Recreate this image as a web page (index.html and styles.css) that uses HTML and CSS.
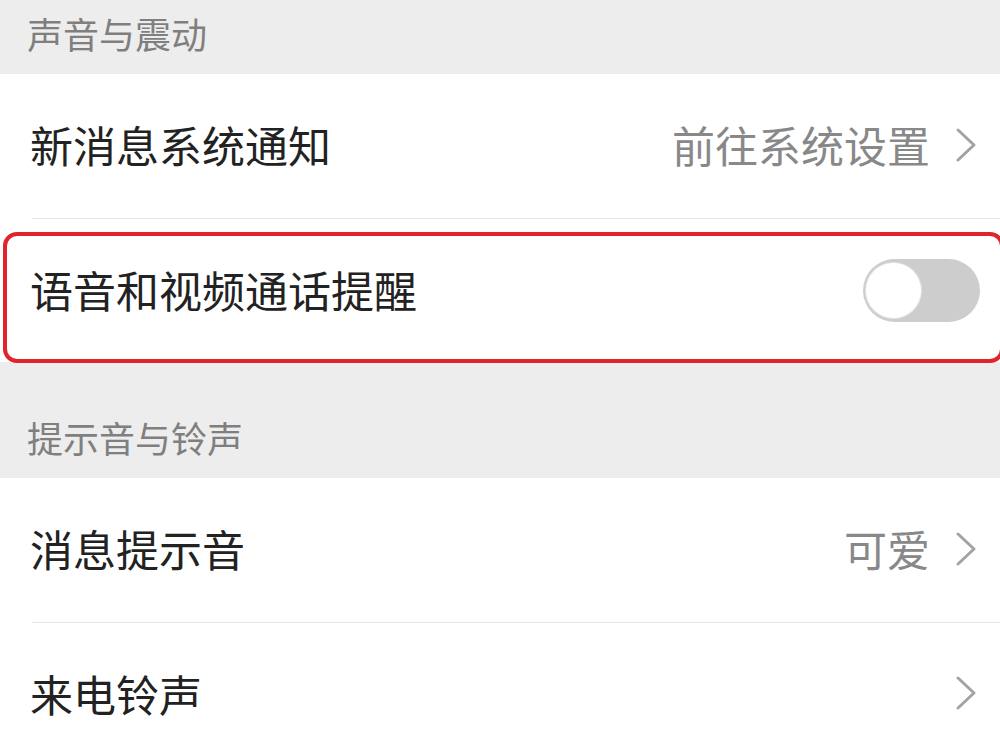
FILE: index.html
```html
<!DOCTYPE html>
<html lang="zh-CN">
<head>
<meta charset="utf-8" />
<meta name="viewport" content="width=device-width, initial-scale=1"/>
<link rel="stylesheet" href="styles.css">
</head>
<body>
  <div class="group-title first">声音与震动</div>
  <ul class="list">
    <li class="cell">
      <span class="label">新消息系统通知</span>
      <span class="extra"><span class="value">前往系统设置</span><svg class="arrow" width="22" height="36" viewBox="0 0 22 36"><polyline points="3,3 19,18 3,33" /></svg></span>
    </li>
    <li class="cell marked">
      <span class="label">语音和视频通话提醒</span>
      <span class="switch"><span class="knob"></span></span>
      <span class="mark"></span>
    </li>
  </ul>

  <div class="group-title">提示音与铃声</div>
  <ul class="list">
    <li class="cell">
      <span class="label">消息提示音</span>
      <span class="extra"><span class="value">可爱</span><svg class="arrow" width="22" height="36" viewBox="0 0 22 36"><polyline points="3,3 19,18 3,33" /></svg></span>
    </li>
    <li class="cell">
      <span class="label">来电铃声</span>
      <span class="extra"><svg class="arrow" width="22" height="36" viewBox="0 0 22 36"><polyline points="3,3 19,18 3,33" /></svg></span>
    </li>
  </ul>
</body>
</html>
```

FILE: styles.css
```css
body { margin:0; background:#ededed; font-family:"Noto Sans CJK SC", "Noto Sans", sans-serif; overflow:hidden; }

.group-title {
	height:116px;
	box-sizing:border-box;
	display:flex;
	align-items:flex-end;
	padding:0 0 23px 27px;
	font-size:36px;
	line-height:1;
	color:#7f7f7f;
}
.group-title.first { height:74px; }

.list { list-style:none; margin:0; padding:0 0 0 32px; background:#fff; }

.cell {
	position:relative;
	height:144px;
	box-sizing:border-box;
	display:flex;
	align-items:center;
	justify-content:space-between;
	padding:0 23px 3px 0;
}
.cell + .cell { border-top:1px solid #e6e6e6; }

.label { font-size:43px; line-height:1; color:#222; margin-left:-2px; }

.extra { display:flex; align-items:center; gap:25px; }
.value { font-size:43px; line-height:1; color:#888; }
.arrow polyline { fill:none; stroke:#a3a3a3; stroke-width:3; stroke-linecap:round; stroke-linejoin:round; }

.switch {
	position:relative;
	width:117px;
	height:63px;
	margin:3px -3px 0 0;
	border-radius:32px;
	background:#cdcdcd;
}
.knob {
	position:absolute;
	left:3px;
	top:4px;
	width:55px;
	height:55px;
	border-radius:50%;
	background:#fff;
	box-shadow:0 0 0 1px #e2e2e2;
}

/* red annotation frame */
.mark {
	position:absolute;
	top:13px;
	bottom:-1px;
	left:-29px;
	right:-4px;
	border:4px solid #e2232b;
	border-radius:14px;
	pointer-events:none;
}
```
